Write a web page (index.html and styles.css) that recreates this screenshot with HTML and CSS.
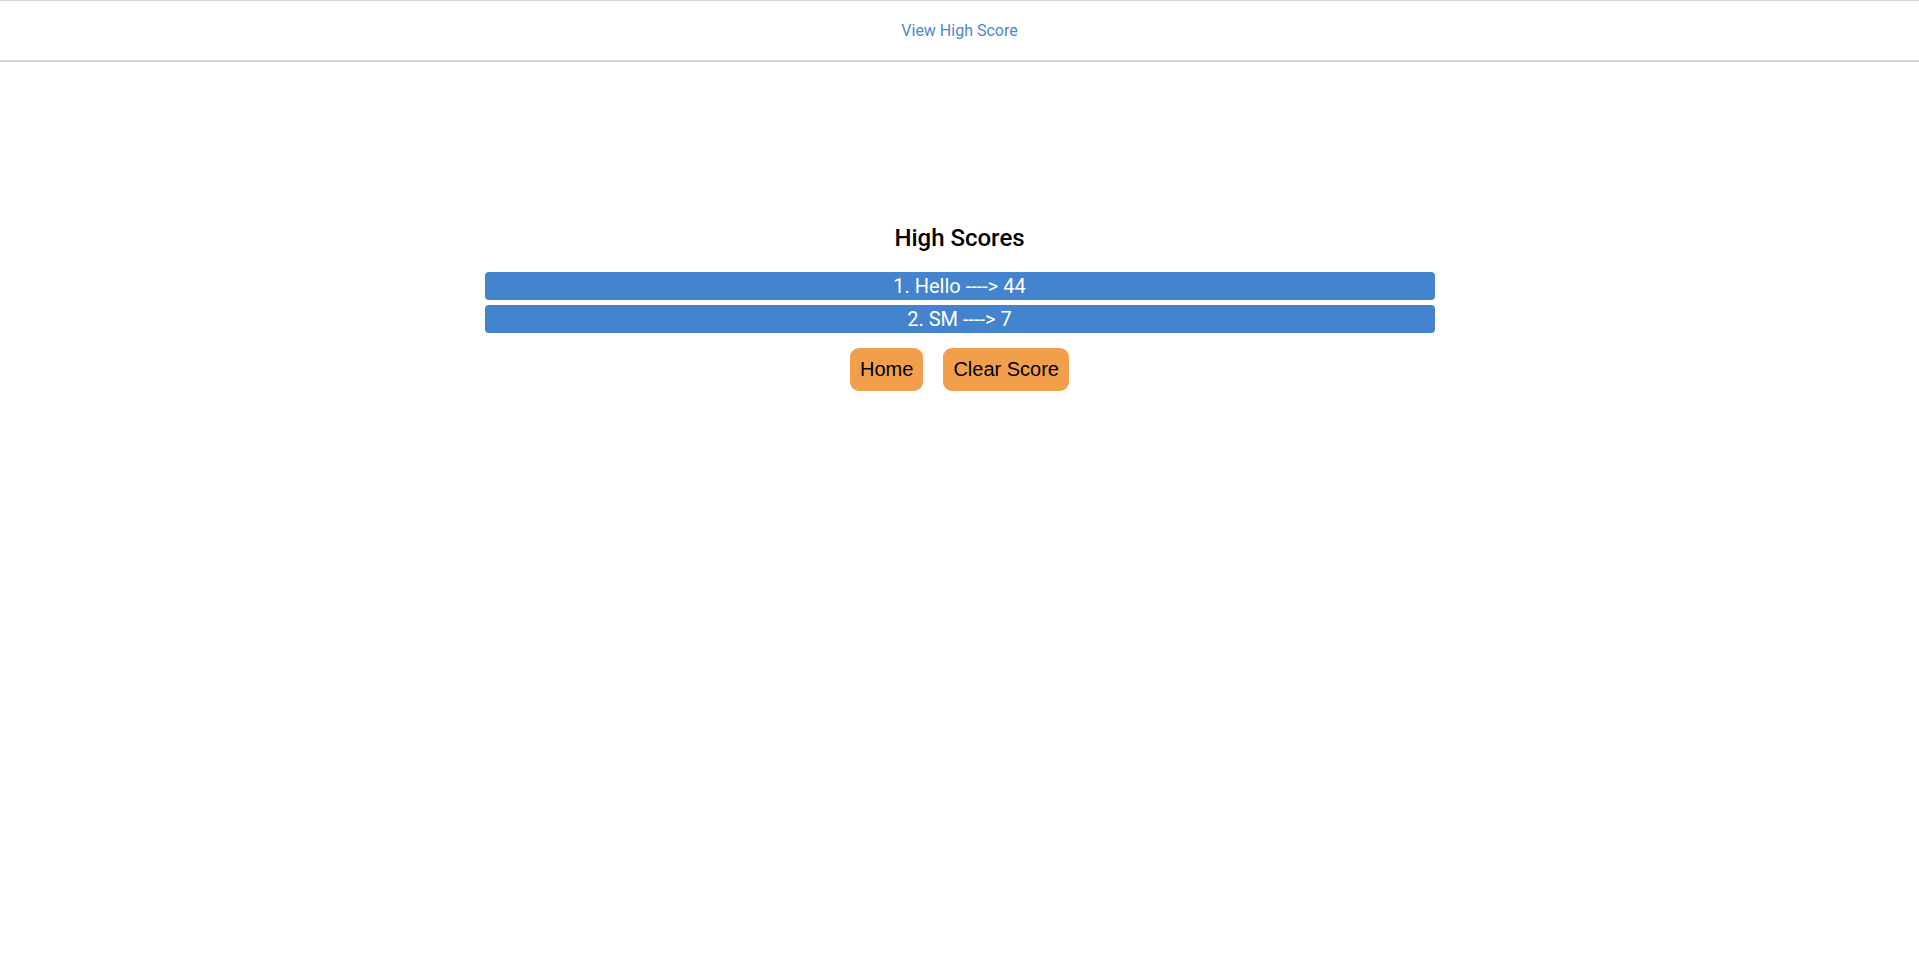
FILE: index.html
```html
<!DOCTYPE html>
<html lang="en">
<head>
<meta charset="utf-8">
<title>High Scores</title>
<link rel="stylesheet" href="styles.css">
</head>
<body>
<header class="topbar">
  <a class="hs-link" href="#">View High Score</a>
</header>
<main class="main">
  <h2 class="title">High Scores</h2>
  <ol class="score-list">
    <li class="score-item">1. Hello ----&gt; 44</li>
    <li class="score-item">2. SM ----&gt; 7</li>
  </ol>
  <div class="actions">
    <button class="btn">Home</button>
    <button class="btn">Clear Score</button>
  </div>
</main>
</body>
</html>
```
FILE: styles.css
```css
html, body {
  margin: 0;
  padding: 0;
  background: #ffffff;
  font-family: Roboto, "Liberation Sans", Arial, sans-serif;
}
.topbar {
  height: 59px;
  border-top: 1px solid #dadada;
  border-bottom: 2px solid #d6d6d6;
  display: flex;
  align-items: center;
  justify-content: center;
}
.hs-link {
  color: #4a87d6;
  text-decoration: none;
  font-size: 16px;
}
.main {
  display: flex;
  flex-direction: column;
  align-items: center;
  padding-top: 162px;
}
.title {
  margin: 0 0 20px 0;
  font-size: 24px;
  font-weight: 500;
  color: #000;
}
.score-list {
  list-style: none;
  margin: 0;
  padding: 0;
  width: 950px;
  display: flex;
  flex-direction: column;
  gap: 5px;
}
.score-item {
  background: #4483ce;
  color: #fff;
  border-radius: 4px;
  text-align: center;
  font-size: 20px;
  height: 28px;
  line-height: 28px;
}
.actions {
  display: flex;
  gap: 20px;
  margin-top: 15px;
}
.btn {
  font-family: "Liberation Sans", Arial, sans-serif;
  font-size: 20px;
  color: #000;
  background: #f29f4c;
  border: none;
  border-radius: 9px;
  padding: 10px 10px;
  line-height: 23px;
}
```
